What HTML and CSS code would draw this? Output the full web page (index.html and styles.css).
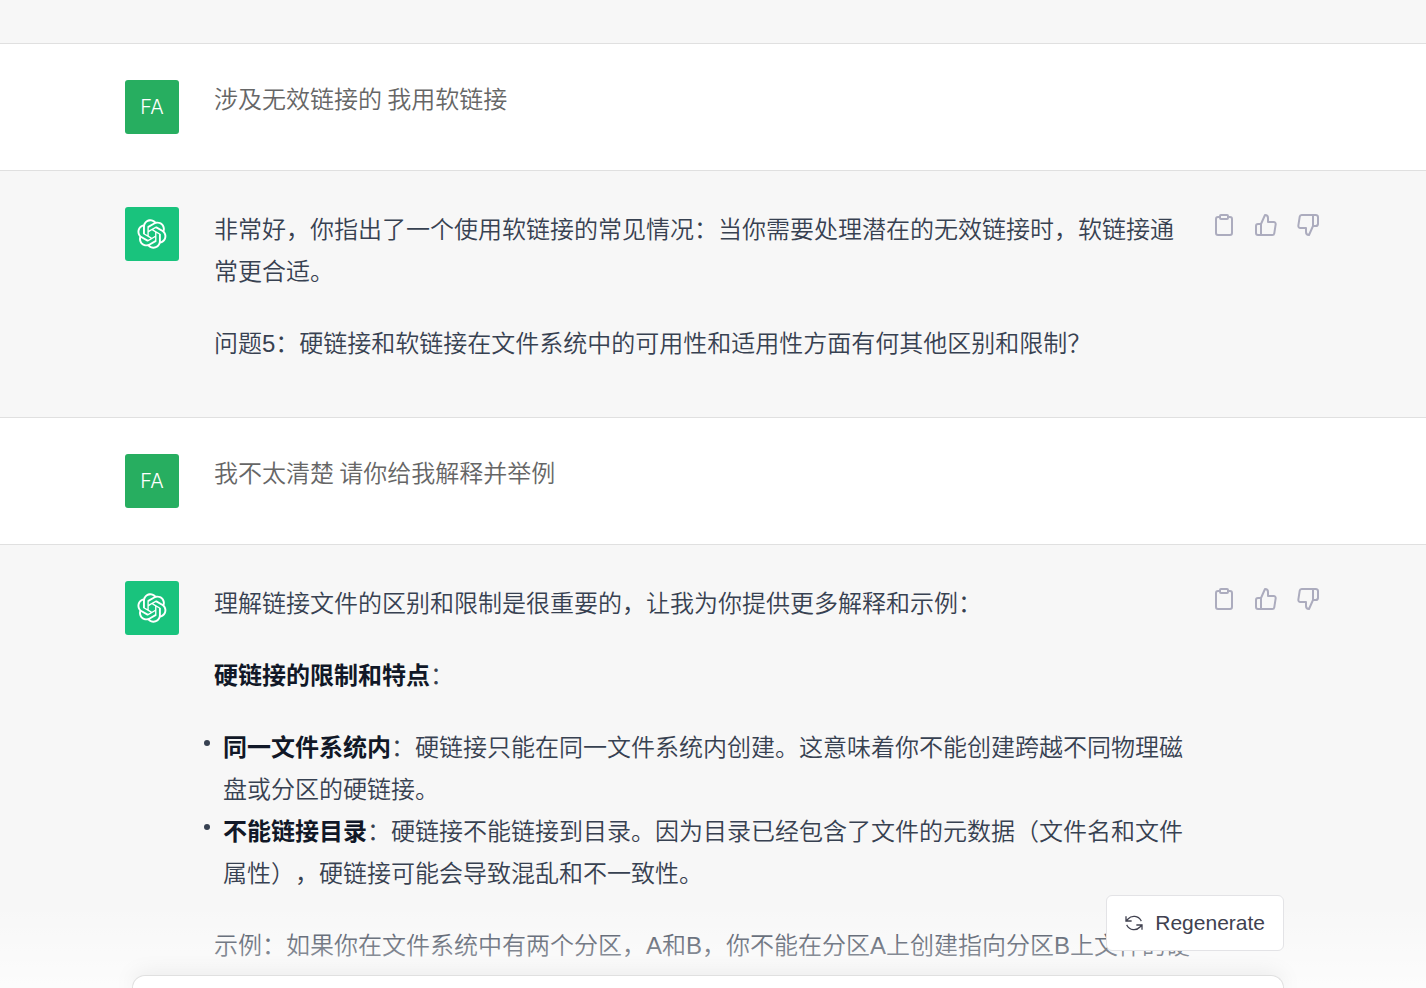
FILE: index.html
```html
<!DOCTYPE html>
<html lang="zh-CN">
<head>
<meta charset="utf-8">
<meta name="viewport" content="width=device-width, initial-scale=1">
<title>Chat</title>
<link rel="stylesheet" href="styles.css">
</head>
<body>
<svg class="sprite" aria-hidden="true">
  <symbol id="logo" viewBox="0 0 41 41"><path fill="currentColor" d="M37.5324 16.8707C37.9808 15.5241 38.1363 14.0974 37.9886 12.6859C37.8409 11.2744 37.3934 9.91076 36.676 8.68622C35.6126 6.83404 33.9882 5.3676 32.0373 4.4985C30.0864 3.62941 27.9098 3.40259 25.8215 3.85078C24.8796 2.7893 23.7219 1.94125 22.4257 1.36341C21.1295 0.785575 19.7249 0.491269 18.3058 0.500197C16.1708 0.495044 14.0893 1.16803 12.3614 2.42214C10.6335 3.67624 9.34853 5.44666 8.6917 7.47815C7.30085 7.76286 5.98686 8.3414 4.8377 9.17505C3.68854 10.0087 2.73073 11.0782 2.02839 12.312C0.956464 14.1591 0.498905 16.2988 0.721698 18.4228C0.944492 20.5467 1.83612 22.5449 3.268 24.1293C2.81966 25.4759 2.66413 26.9026 2.81182 28.3141C2.95951 29.7256 3.40701 31.0892 4.12437 32.3138C5.18791 34.1659 6.8123 35.6322 8.76321 36.5013C10.7141 37.3704 12.8907 37.5973 14.9789 37.1492C15.9208 38.2107 17.0786 39.0587 18.3747 39.6366C19.6709 40.2144 21.0755 40.5087 22.4946 40.4998C24.6307 40.5054 26.7133 39.8321 28.4418 38.5772C30.1704 37.3223 31.4556 35.5506 32.1119 33.5179C33.5027 33.2332 34.8167 32.6547 35.9659 31.821C37.115 30.9874 38.0728 29.9178 38.7752 28.684C39.8458 26.8371 40.3023 24.6979 40.0789 22.5748C39.8556 20.4517 38.9639 18.4544 37.5324 16.8707ZM22.4978 37.8849C20.7443 37.8874 19.0459 37.2733 17.6994 36.1501C17.7601 36.117 17.8666 36.0586 17.936 36.0161L25.9004 31.4156C26.1003 31.3019 26.2663 31.137 26.3813 30.9378C26.4964 30.7386 26.5563 30.5124 26.5549 30.2825V19.0542L29.9213 20.998C29.9389 21.0068 29.9541 21.0198 29.9656 21.0359C29.977 21.052 29.9842 21.0707 29.9867 21.0902V30.3889C29.9842 32.375 29.1946 34.2791 27.7909 35.6841C26.3872 37.0892 24.4838 37.8806 22.4978 37.8849ZM6.39227 31.0064C5.51397 29.4888 5.19742 27.7107 5.49804 25.9832C5.55718 26.0187 5.66048 26.0818 5.73461 26.1244L13.699 30.7248C13.8975 30.8408 14.1233 30.902 14.3532 30.902C14.583 30.902 14.8088 30.8408 15.0073 30.7248L24.731 25.1103V28.9979C24.7321 29.0177 24.7283 29.0376 24.7199 29.0556C24.7115 29.0736 24.6988 29.0893 24.6829 29.1012L16.6317 33.7497C14.9096 34.7416 12.8643 35.0097 10.9447 34.4954C9.02506 33.9811 7.38785 32.7263 6.39227 31.0064ZM4.29707 13.6194C5.17156 12.0998 6.55279 10.9364 8.19885 10.3327C8.19885 10.4013 8.19491 10.5228 8.19491 10.6071V19.808C8.19351 20.0378 8.25334 20.2638 8.36823 20.4629C8.48312 20.6619 8.64893 20.8267 8.84863 20.9404L18.5723 26.5542L15.206 28.4979C15.1894 28.5089 15.1703 28.5155 15.1505 28.5173C15.1307 28.5191 15.1107 28.516 15.0924 28.5082L7.04046 23.8557C5.32135 22.8601 4.06716 21.2235 3.55289 19.3046C3.03862 17.3858 3.30624 15.3413 4.29707 13.6194ZM31.955 20.0556L22.2312 14.4411L25.5976 12.4981C25.6142 12.4872 25.6333 12.4805 25.6531 12.4787C25.6729 12.4769 25.6928 12.4801 25.7111 12.4879L33.7631 17.1364C34.9967 17.849 36.0017 18.8982 36.6606 20.1613C37.3194 21.4244 37.6047 22.849 37.4832 24.2684C37.3617 25.6878 36.8382 27.0432 35.9743 28.1759C35.1103 29.3086 33.9415 30.1717 32.6047 30.6641C32.6047 30.5947 32.6047 30.4733 32.6047 30.3889V21.188C32.6066 20.9586 32.5474 20.7328 32.4332 20.5338C32.319 20.3348 32.154 20.1698 31.955 20.0556ZM35.3055 15.0128C35.2464 14.9765 35.1431 14.9142 35.069 14.8717L27.1045 10.2712C26.906 10.1554 26.6803 10.0943 26.4504 10.0943C26.2206 10.0943 25.9948 10.1554 25.7963 10.2712L16.0726 15.8858V11.9982C16.0715 11.9783 16.0753 11.9585 16.0837 11.9405C16.0921 11.9225 16.1048 11.9068 16.1207 11.8949L24.1719 7.25025C25.4053 6.53903 26.8158 6.19376 28.2383 6.25482C29.6608 6.31589 31.0364 6.78077 32.2044 7.59508C33.3723 8.40939 34.2842 9.53945 34.8334 10.8531C35.3826 12.1667 35.5464 13.6095 35.3055 15.0128ZM14.2424 21.9419L10.8752 19.9981C10.8576 19.9893 10.8423 19.9763 10.8309 19.9602C10.8195 19.9441 10.8122 19.9254 10.8098 19.9058V10.6071C10.8107 9.18295 11.2173 7.78848 11.9819 6.58696C12.7466 5.38544 13.8377 4.42659 15.1275 3.82264C16.4173 3.21869 17.8524 2.99464 19.2649 3.1767C20.6775 3.35876 22.0089 3.93941 23.1034 4.85067C23.0427 4.88379 22.937 4.94215 22.8668 4.98473L14.9024 9.58517C14.7025 9.69878 14.5366 9.86356 14.4215 10.0626C14.3065 10.2616 14.2466 10.4877 14.2479 10.7175L14.2424 21.9419ZM16.071 17.9991L20.4018 15.4978L24.7325 17.9975V22.9985L20.4018 25.4983L16.071 22.9985V17.9991Z"/></symbol>
  <symbol id="clipboard" viewBox="0 0 24 24"><path d="M16 4h2a2 2 0 0 1 2 2v14a2 2 0 0 1-2 2H6a2 2 0 0 1-2-2V6a2 2 0 0 1 2-2h2"/><rect x="8" y="2" width="8" height="4" rx="1"/></symbol>
  <symbol id="up" viewBox="0 0 24 24"><path d="M14 9V5a3 3 0 0 0-3-3l-4 9v11h11.28a2 2 0 0 0 2-1.7l1.38-9a2 2 0 0 0-2-2.3zM7 22H4a2 2 0 0 1-2-2v-7a2 2 0 0 1 2-2h3"/></symbol>
  <symbol id="down" viewBox="0 0 24 24"><path d="M10 15v4a3 3 0 0 0 3 3l4-9V2H5.72a2 2 0 0 0-2 1.7l-1.38 9a2 2 0 0 0 2 2.3zm7-13h2.67A2.31 2.31 0 0 1 22 4v7a2.31 2.31 0 0 1-2.33 2H17"/></symbol>
  <symbol id="refresh" viewBox="0 0 18 18"><path d="M1 3v4h5M1 7l2-2A8 8 0 0 1 16 6.500M17 15v-4h-5M17 11l-2 2A8 8 0 0 1 2 11.500"/></symbol>
</svg>

<div class="app">
  <main class="thread">
    <div class="message message-bot message-tail"></div>

    <article class="message">
      <div class="row">
        <div class="avatar avatar-user">FA</div>
        <div class="content content-user">涉及无效链接的 我用软链接</div>
      </div>
    </article>

    <article class="message message-bot">
      <div class="row">
        <div class="avatar avatar-bot"><svg class="logo" role="img" aria-label="ChatGPT"><use href="#logo"/></svg></div>
        <div class="content">
          <p>非常好，你指出了一个使用软链接的常见情况：当你需要处理潜在的无效链接时，软链接通常更合适。</p>
          <p>问题5：硬链接和软链接在文件系统中的可用性和适用性方面有何其他区别和限制？</p>
        </div>
        <div class="actions">
          <button type="button" aria-label="复制"><svg class="icon"><use href="#clipboard"/></svg></button>
          <button type="button" aria-label="赞"><svg class="icon"><use href="#up"/></svg></button>
          <button type="button" aria-label="踩"><svg class="icon"><use href="#down"/></svg></button>
        </div>
      </div>
    </article>

    <article class="message">
      <div class="row">
        <div class="avatar avatar-user">FA</div>
        <div class="content content-user">我不太清楚 请你给我解释并举例</div>
      </div>
    </article>

    <article class="message message-bot">
      <div class="row">
        <div class="avatar avatar-bot"><svg class="logo" role="img" aria-label="ChatGPT"><use href="#logo"/></svg></div>
        <div class="content">
          <p>理解链接文件的区别和限制是很重要的，让我为你提供更多解释和示例：</p>
          <p><strong>硬链接的限制和特点</strong>：</p>
          <ul>
            <li><strong>同一文件系统内</strong>：硬链接只能在同一文件系统内创建。这意味着你不能创建跨越不同物理磁盘或分区的硬链接。</li>
            <li><strong>不能链接目录</strong>：硬链接不能链接到目录。因为目录已经包含了文件的元数据（文件名和文件属性），硬链接可能会导致混乱和不一致性。</li>
          </ul>
          <p>示例：如果你在文件系统中有两个分区，A和B，你不能在分区A上创建指向分区B上文件的硬</p>
        </div>
        <div class="actions">
          <button type="button" aria-label="复制"><svg class="icon"><use href="#clipboard"/></svg></button>
          <button type="button" aria-label="赞"><svg class="icon"><use href="#up"/></svg></button>
          <button type="button" aria-label="踩"><svg class="icon"><use href="#down"/></svg></button>
        </div>
      </div>
    </article>
  </main>

  <footer class="dock">
    <div class="dock-inner">
      <button type="button" class="regenerate"><svg class="refresh" aria-hidden="true"><use href="#refresh"/></svg>Regenerate</button>
      <div class="composer"></div>
    </div>
  </footer>
</div>
</body>
</html>
```
FILE: styles.css
```css
* {
  box-sizing: border-box;
}

body {
  margin: 0;
  font-family: "Liberation Sans", "Noto Sans CJK SC", sans-serif;
  font-size: 24px;
  font-weight: 350;
  line-height: 42px;
  color: #374151;
  background: #fff;
  text-spacing-trim: space-all;
}

.sprite {
  position: absolute;
  width: 0;
  height: 0;
}

.app {
  position: relative;
  height: 100vh;
  overflow: hidden;
}

.message {
  padding: 36px 24px;
  border-bottom: 1px solid #e0e0e0;
  background: #fff;
}

.message-bot {
  background: #f7f7f7;
}

.message-tail {
  padding: 43px 0 0;
}

.row {
  display: flex;
  align-items: flex-start;
  max-width: 1176px;
  margin: 0 auto;
}

.avatar {
  display: flex;
  flex: none;
  align-items: center;
  justify-content: center;
  width: 54px;
  height: 54px;
  margin-right: 35px;
  border-radius: 3px;
  color: #fff;
}

.avatar-user {
  background: #27ae60;
  font-family: Inter, "Noto Sans", sans-serif;
  font-size: 20px;
  font-weight: 300;
}

.avatar-bot {
  background: #19c37d;
}

.logo {
  width: 30px;
  height: 30px;
}

.content {
  flex: 1;
  min-width: 0;
  padding: 2px 0 16px;
}

.content-user {
  padding: 0;
  font-family: "Noto Sans CJK SC", sans-serif;
  line-height: 36px;
  color: #666;
}

.content p {
  margin: 0 0 30px;
}

.content p:last-child {
  margin-bottom: 0;
}

.content ul {
  margin: 0 0 30px;
  padding: 0;
  list-style: none;
}

.content li {
  position: relative;
  padding-left: 9px;
}

.content li::before {
  content: "";
  position: absolute;
  top: 13px;
  left: -10px;
  width: 6px;
  height: 6px;
  border-radius: 50%;
  background: #374151;
}

strong {
  font-weight: 700;
  color: #111827;
}

.actions {
  display: flex;
  flex: none;
  gap: 6px;
  margin: 0 -25px 0 12px;
}

.actions button {
  display: flex;
  padding: 6px;
  border: 0;
  background: none;
  color: #acacbe;
}

.icon {
  width: 24px;
  height: 24px;
  fill: none;
  stroke: currentColor;
  stroke-width: 2;
  stroke-linecap: round;
  stroke-linejoin: round;
}

.dock {
  position: absolute;
  right: 0;
  bottom: 0;
  left: 0;
  padding: 0 34px 0 24px;
  background: linear-gradient(rgba(255, 255, 255, 0) 10%, rgba(255, 255, 255, 0.65));
}

.dock-inner {
  display: flex;
  flex-direction: column;
  align-items: flex-end;
  gap: 24px;
  max-width: 1152px;
  margin: 0 auto;
}

.regenerate {
  display: flex;
  align-items: center;
  gap: 12px;
  height: 56px;
  padding: 0 18px;
  border: 1px solid #e3e3e6;
  border-radius: 6px;
  background: #fff;
  color: #40414f;
  font-family: "Liberation Sans", sans-serif;
  font-size: 21px;
  line-height: 30px;
}

.refresh {
  width: 18px;
  height: 18px;
  fill: none;
  stroke: currentColor;
  stroke-width: 1.3;
  stroke-linecap: square;
}

.composer {
  align-self: stretch;
  height: 13px;
  border: 1px solid #e0e0e0;
  border-bottom: 0;
  border-radius: 24px 24px 0 0;
  background: #fff;
  box-shadow: 0 0 22px rgba(0, 0, 0, 0.1);
}
```
